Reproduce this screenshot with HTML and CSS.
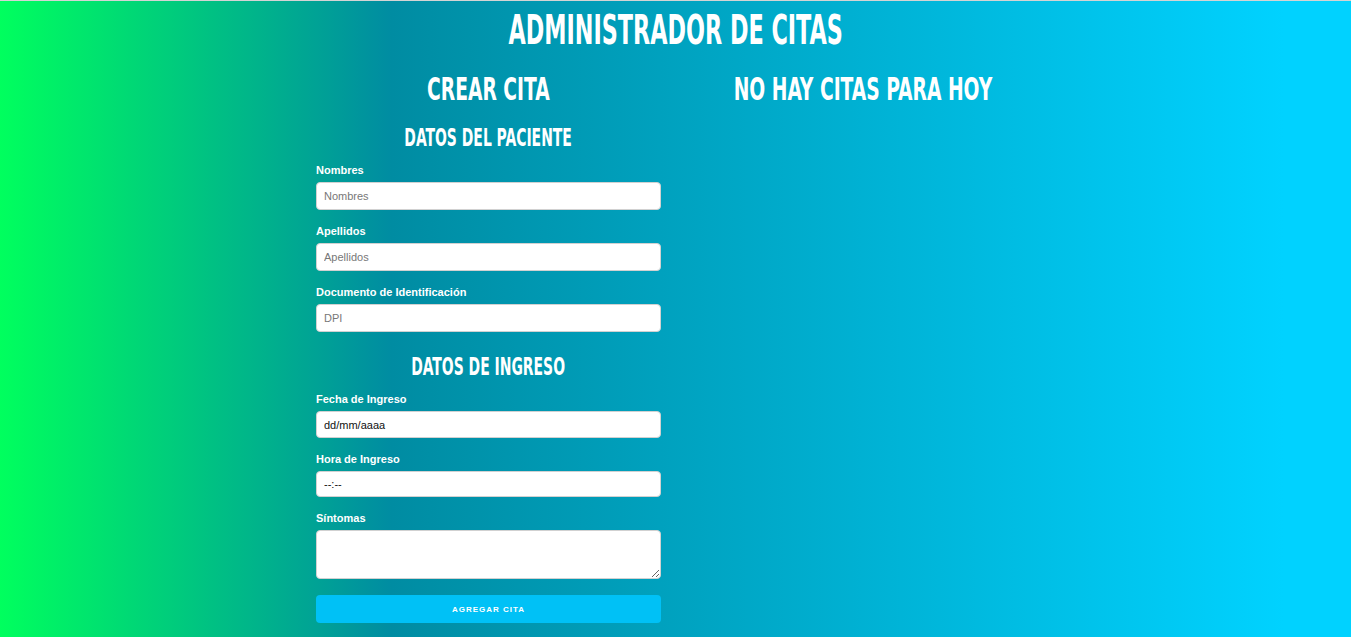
FILE: index.html
```html
<!DOCTYPE html>
<html lang="es">
<head>
<meta charset="utf-8">
<title>Administrador de Citas</title>
<link rel="stylesheet" href="styles.css">
</head>
<body>
<h1 class="title"><span>Administrador de Citas</span></h1>
<div class="container">
  <div class="column">
    <h2 class="col-title"><span>Crear Cita</span></h2>
    <form class="form">
      <h3 class="section-title"><span>Datos del Paciente</span></h3>
      <label class="label" for="nombres">Nombres</label>
      <input class="input" id="nombres" type="text" placeholder="Nombres">
      <label class="label" for="apellidos">Apellidos</label>
      <input class="input" id="apellidos" type="text" placeholder="Apellidos">
      <label class="label" for="dpi">Documento de Identificación</label>
      <input class="input input-last" id="dpi" type="text" placeholder="DPI">

      <h3 class="section-title"><span>Datos de Ingreso</span></h3>
      <label class="label" for="fecha">Fecha de Ingreso</label>
      <input class="input input-date" id="fecha" type="text" value="dd/mm/aaaa">
      <label class="label" for="hora">Hora de Ingreso</label>
      <input class="input input-time" id="hora" type="text" value="--:--">
      <label class="label" for="sintomas">Síntomas</label>
      <textarea class="input textarea" id="sintomas"></textarea>
      <button class="button" type="submit">Agregar Cita</button>
    </form>
  </div>
  <div class="column">
    <h2 class="col-title"><span>No hay citas para hoy</span></h2>
  </div>
</div>
</body>
</html>
```

FILE: styles.css
```css
html {
  height: 100%;
}
body {
  margin: 0;
  min-height: 100%;
  border-top: 1px solid #d4d4d4;
  box-sizing: border-box;
  background: linear-gradient(90deg, #00ff5e 0%, #008ca2 29%, #00d2ff 95%);
  font-family: "Liberation Sans", Arial, sans-serif;
  color: #fff;
}
.title, .col-title, .section-title {
  font-family: "DejaVu Sans Condensed", "DejaVu Sans", sans-serif;
  font-weight: 700;
  text-transform: uppercase;
  white-space: nowrap;
  color: #fff;
  margin: 0;
  display: flex;
  justify-content: center;
}
.title span, .col-title span, .section-title span {
  flex: none;
  transform: scaleX(0.62);
  transform-origin: center;
}
.col-title span {
  transform: scaleX(0.65);
}
.title {
  font-size: 40px;
  line-height: 40px;
  margin-top: 9px;
}
.container {
  width: 719px;
  margin: 23px auto 0;
  display: flex;
  gap: 29px;
}
.column {
  width: 345px;
  flex: none;
}
.col-title {
  font-size: 32px;
  line-height: 32px;
}
.form {
  display: flex;
  flex-direction: column;
}
.section-title {
  font-size: 25px;
  line-height: 25px;
  margin: 20px 0 12px;
}
.input-last + .section-title {
  margin-top: 22px;
}
.label {
  display: block;
  font-size: 11px;
  line-height: 14px;
  font-weight: 700;
  padding-top: 1px;
  margin-bottom: 5px;
}
.input {
  box-sizing: border-box;
  width: 100%;
  height: 28px;
  margin: 0 0 13px;
  padding: 0 7px;
  border: 1px solid #d1d1d1;
  border-radius: 4px;
  background: #fff;
  font-family: "Liberation Sans", Arial, sans-serif;
  font-size: 11px;
  color: #111;
  outline: none;
}
.input::placeholder {
  color: #777;
}
.input-last {
  margin-bottom: 0;
}
.input-date {
  height: 27px;
  margin-bottom: 13px;
}
.input-time {
  height: 26px;
  margin-bottom: 13px;
}
.textarea {
  height: 49px;
  margin-bottom: 16px;
  padding: 6px 7px;
  resize: vertical;
}
.button {
  height: 28px;
  width: 100%;
  border: none;
  border-radius: 4px;
  background: #00c1f6;
  color: #fff;
  font-family: "Liberation Sans", Arial, sans-serif;
  font-size: 8px;
  font-weight: 700;
  letter-spacing: 1px;
  text-transform: uppercase;
  cursor: pointer;
}
```
